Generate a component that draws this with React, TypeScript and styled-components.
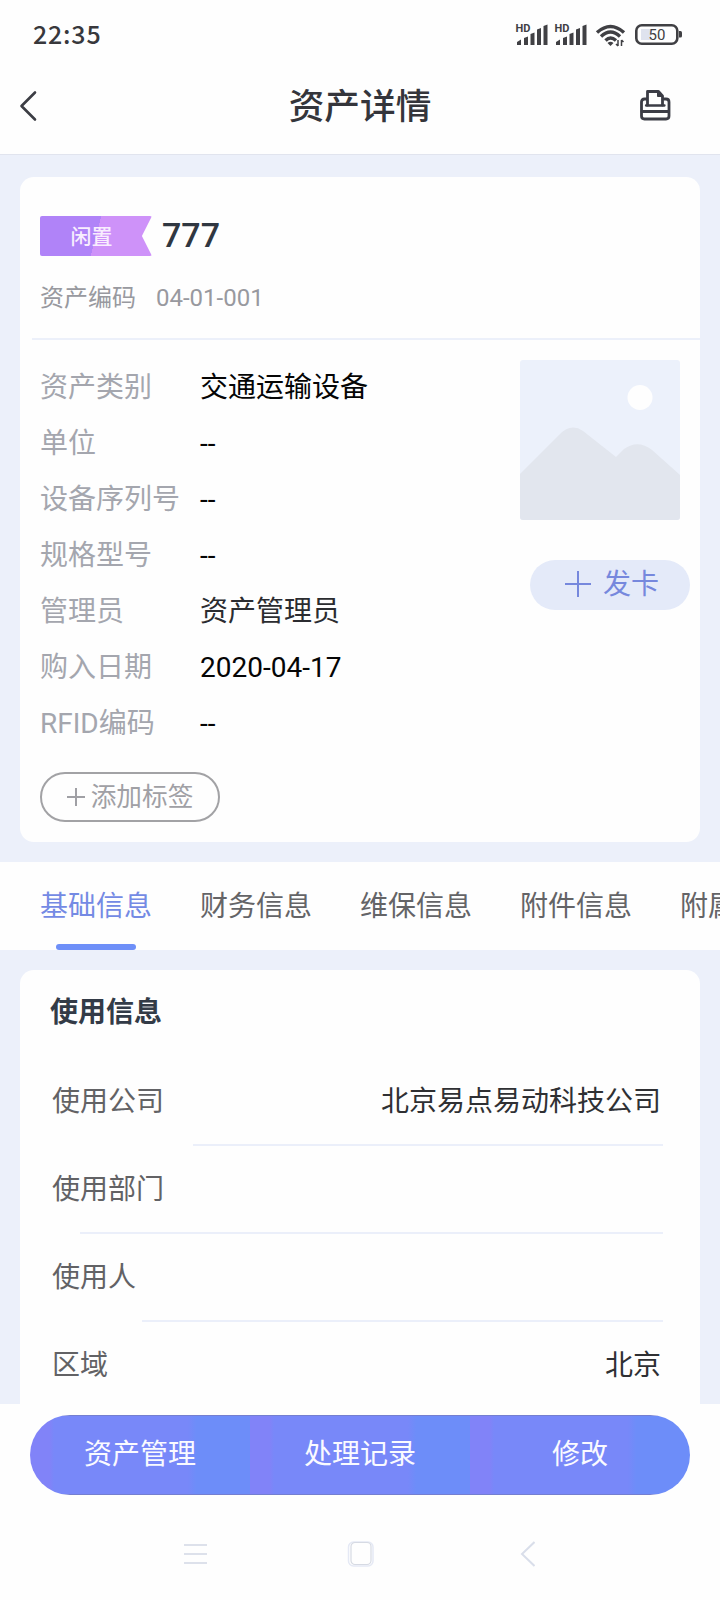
import React from "react";
import styled, { createGlobalStyle } from "styled-components";

const GlobalStyle = createGlobalStyle`
  *, *::before, *::after { box-sizing: border-box; }
  body {
    margin: 0;
    background: #fefefe;
    font-family: Roboto, "Noto Sans CJK SC", sans-serif;
    font-size: 28px;
    color: #2f3136;
  }
`;

const Screen = styled.div`
  width: 720px;
  height: 1600px;
  overflow: hidden;
  display: flex;
  flex-direction: column;
`;

const StatusBar = styled.div`
  height: 60px;
  flex: none;
  display: flex;
  align-items: center;
  justify-content: space-between;
  padding: 10px 37px 0 33px;
`;

const Clock = styled.span`
  font-family: "Noto Sans CJK SC", sans-serif;
  font-size: 25px;
  line-height: 30px;
  font-weight: 500;
  letter-spacing: 0.8px;
  padding-bottom: 4px;
  color: #38383c;
`;

const StatusIcons = styled.svg`
  display: block;
  margin-top: -1px;
`;

const Header = styled.header`
  height: 95px;
  flex: none;
  display: grid;
  grid-template-columns: 80px 1fr 80px;
  align-items: center;
  border-bottom: 1px solid #e1e4ee;
  padding-bottom: 3px;
`;

const HeaderIcon = styled.svg`
  display: block;
`;

const Title = styled.h1`
  margin: 0;
  padding-top: 3px;
  text-align: center;
  font-size: 35.7px;
  line-height: 44px;
  font-weight: 500;
  color: #34353b;
`;

const Content = styled.main`
  height: 1249px;
  flex: none;
  overflow: hidden;
  background: #ecf0fa;
  padding-top: 22px;
  display: flex;
  flex-direction: column;
  gap: 20px;
`;

const Card = styled.section<{ $height: number }>`
  height: ${(p) => p.$height}px;
  flex: none;
  margin: 0 20px;
  background: #fefefe;
  border-radius: 14px;
`;

const Summary = styled.div`
  height: 161px;
  padding: 39px 20px 0;
`;

const NameRow = styled.div`
  display: flex;
  align-items: center;
  height: 40px;
`;

const StatusRibbon = styled.span`
  width: 112px;
  height: 40px;
  padding-right: 9px;
  border-radius: 2px;
  background: linear-gradient(105deg, #b083f8 0 50%, #ce92f9 50% 100%);
  clip-path: polygon(0 0, 100% 0, 91% 50%, 100% 100%, 0 100%);
  color: #f8eefe;
  font-size: 21px;
  font-weight: 500;
  line-height: 42px;
  text-align: center;
`;

const AssetName = styled.span`
  margin-left: 10px;
  font-size: 34px;
  line-height: 38px;
  height: 40px;
  font-weight: 500;
  color: #303741;
`;

const CodeRow = styled.div`
  display: flex;
  gap: 20px;
  margin-top: 28px;
  font-size: 24px;
  line-height: 28px;
  color: #98999f;
`;

const Details = styled.div`
  margin-left: 12px;
  border-top: 2px solid #ecf0fa;
  padding: 20px 0 0 8px;
  display: flex;
  justify-content: space-between;
`;

const Fields = styled.dl`
  margin: 0;
  display: grid;
  grid-template-columns: 160px auto;
  grid-auto-rows: 56px;
  line-height: 56px;
`;

const FieldLabel = styled.dt`
  color: #a4a6ae;
  white-space: nowrap;
`;

const FieldValue = styled.dd<{ $soft?: boolean }>`
  margin: 0;
  color: ${(p) => (p.$soft ? "#2b2c30" : "#050505")};
`;

const Media = styled.div`
  display: flex;
  flex-direction: column;
  align-items: flex-end;
  gap: 40px;
  padding-right: 10px;
`;

const Picture = styled.svg`
  display: block;
  margin-right: 10px;
`;

const IssueButton = styled.button`
  width: 160px;
  height: 50px;
  padding: 0 0 0 4px;
  border: 0;
  border-radius: 25px;
  background: #e4eaf9;
  color: #7688dd;
  font: inherit;
  line-height: 50px;
  display: flex;
  align-items: center;
  justify-content: center;
  gap: 12px;

  svg {
    margin-top: -3px;
  }
`;

const TagButton = styled.button`
  display: flex;
  align-items: center;
  justify-content: center;
  gap: 6px;
  width: 180px;
  height: 50px;
  margin: 20px 0 0 20px;
  padding: 0;
  border: 2px solid #a2a2a5;
  border-radius: 25px;
  background: none;
  color: #a0a0a5;
  font: inherit;
  font-size: 25.7px;
  line-height: 46px;
`;

const Tabs = styled.nav`
  height: 88px;
  flex: none;
  background: #fefefe;
  padding-left: 40px;
  display: flex;
  gap: 48px;
`;

const Tab = styled.a<{ $active?: boolean }>`
  flex: none;
  height: 88px;
  display: flex;
  flex-direction: column;
  align-items: center;
  justify-content: space-between;
  line-height: 90px;
  white-space: nowrap;
  color: ${(p) => (p.$active ? "#748ae4" : "#646467")};
  &::after {
    content: "";
    flex: none;
    width: 80px;
    height: 6px;
    margin-top: -8px;
    border-radius: 3px;
    background: ${(p) => (p.$active ? "#6e8ff8" : "transparent")};
  }
`;

const SectionTitle = styled.h2`
  margin: 0;
  padding: 0 30px;
  height: 88px;
  font-size: 28px;
  line-height: 86px;
  font-weight: 700;
  color: #333b47;
`;

const InfoRow = styled.div<{ $lineStart?: number }>`
  height: 88px;
  margin: 0 37px 0 32px;
  display: flex;
  justify-content: space-between;
  line-height: 88px;
  background: linear-gradient(#ebeffa, #ebeffa) no-repeat right bottom;
  background-size: ${(p) => (p.$lineStart === undefined ? "0 0" : `calc(100% - ${p.$lineStart}px) 2px`)};
`;

const InfoLabel = styled.span`
  color: #626265;
`;

const InfoValue = styled.span`
  padding-right: 2px;
  color: #2f3033;
`;

const Footer = styled.footer`
  flex: 1;
  padding: 11px 30px 0;
`;

const ActionBar = styled.div`
  height: 80px;
  border-radius: 40px;
  overflow: hidden;
  display: flex;
`;

const Action = styled.button`
  flex: 1;
  padding: 0;
  border: solid #747fd0;
  border-width: 1px 0;
  background: linear-gradient(90deg, #8183f8 0 20px, #7888f9 24px 158px, #6d8df9 166px);
  color: #fafaff;
  font: inherit;
  line-height: 78px;
`;

const SystemNav = styled.div`
  display: grid;
  grid-template-columns: 164px 172px auto;
  align-items: center;
  margin: 43px 0 0 153px;
  height: 32px;
`;

const fields: Array<{ label: string; value: string; soft?: boolean }> = [
  { label: "资产类别", value: "交通运输设备" },
  { label: "单位", value: "--" },
  { label: "设备序列号", value: "--" },
  { label: "规格型号", value: "--" },
  { label: "管理员", value: "资产管理员", soft: true },
  { label: "购入日期", value: "2020-04-17" },
  { label: "RFID编码", value: "--" },
];

const tabs = ["基础信息", "财务信息", "维保信息", "附件信息", "附属信息"];

const usage: Array<{ label: string; value: string; line?: number }> = [
  { label: "使用公司", value: "北京易点易动科技公司", line: 141 },
  { label: "使用部门", value: "", line: 28 },
  { label: "使用人", value: "", line: 90 },
  { label: "区域", value: "北京" },
];

const Signal = ({ x }: { x: number }) => (
  <g transform={`translate(${x} 0)`}>
    <text x="-0.500" y="12.500" fontSize="11" fontWeight="700" fontFamily="Roboto">HD</text>
    <path d="M1 26v-3l4-2.500v5.500zM8 26v-7l4-1.500v8.500zM14.500 26v-11l4-1.500v12.500zM21 26v-15.500l4-1.500v17zM27.500 26v-19l4-1.500v20.500z" />
  </g>
);

const Status = () => (
  <StatusIcons width="168" height="32" viewBox="0 0 168 32" fill="#404044">
    <Signal x={1} />
    <Signal x={40} />
    <g fill="none" stroke="#404044" strokeWidth="3.400" transform="translate(81 0)">
      <path d="M1 13.500Q14.500 1.500 28 13.500" />
      <path d="M5 17.500Q14.500 8.500 24 17.500" />
      <path d="M9.500 21.500Q14.500 16.500 20 21.500" />
    </g>
    <path d="M92.500 24q3-2.500 6 0l-3 3z" />
    <path d="M103 21v6M103 27l-2-2M106.500 27v-6M106.500 21l2 2" stroke="#404044" strokeWidth="1.500" />
    <rect x="121.300" y="6.300" width="41" height="18.400" rx="5.500" fill="none" stroke="#404044" strokeWidth="2.600" />
    <rect x="126" y="10" width="10" height="11" fill="#dfe3ee" />
    <path d="M164 12h1.500q1.500 0 1.500 1.500v3.500q0 1.500-1.500 1.500h-1.500z" />
    <text x="142" y="20.500" fontSize="15" textAnchor="middle" fontFamily="Roboto">50</text>
  </StatusIcons>
);

const Plus = ({ size, weight }: { size: number; weight: number }) => (
  <svg width={size} height={size} viewBox={`0 0 ${size} ${size}`} fill="none" stroke="currentColor" strokeWidth={weight}>
    <path d={`M0 ${size / 2}H${size}M${size / 2} 0V${size}`} />
  </svg>
);

export default function App() {
  return (
    <Screen>
      <GlobalStyle />
      <StatusBar>
        <Clock>22:35</Clock>
        <Status />
      </StatusBar>
      <Header>
        <HeaderIcon width="60" height="40" viewBox="0 0 60 40" fill="none" stroke="#3c3d44" strokeWidth="2.600" strokeLinecap="round" strokeLinejoin="round">
          <path d="M35 6.500L21.500 20L35 33.500" />
        </HeaderIcon>
        <Title>资产详情</Title>
        <HeaderIcon width="32" height="32" viewBox="0 0 32 32" fill="none" stroke="#3b3c45" strokeWidth="2.800" strokeLinejoin="round" strokeLinecap="round">
          <path d="M6.500 9H4.500q-3 0-3 3V26q0 3 3 3h21.500q3 0 3-3V12q0-3-3-3H24" />
          <path d="M7.500 15V1.500H18.500L22.500 6V15M2 21.500H28.500" />
          <path d="M6 15.500H24.500" strokeWidth="2.300" />
          <path d="M17.500 2V6.500H22.500z" fill="#3b3c45" strokeWidth="1" />
        </HeaderIcon>
      </Header>
      <Content>
        <Card $height={665}>
          <Summary>
            <NameRow>
              <StatusRibbon>闲置</StatusRibbon>
              <AssetName>777</AssetName>
            </NameRow>
            <CodeRow>
              <span>资产编码</span>
              <span>04-01-001</span>
            </CodeRow>
          </Summary>
          <Details>
            <Fields>
              {fields.map((f) => (
                <React.Fragment key={f.label}>
                  <FieldLabel>{f.label}</FieldLabel>
                  <FieldValue $soft={f.soft}>{f.value}</FieldValue>
                </React.Fragment>
              ))}
            </Fields>
            <Media>
              <Picture width="160" height="160" viewBox="0 0 160 160">
                <rect width="160" height="160" rx="3" fill="#ecf1fb" />
                <circle cx="120" cy="37.500" r="12.500" fill="#fefefe" />
                <path d="M0 114L39 75Q51 62.500 63 71L96 97L104 89Q118 79 132 90L160 115V157q0 3-3 3H3q-3 0-3-3z" fill="#e2e6ee" />
              </Picture>
              <IssueButton>
                <Plus size={26} weight={2} />
                发卡
              </IssueButton>
            </Media>
          </Details>
          <TagButton>
            <Plus size={18} weight={2} />
            添加标签
          </TagButton>
        </Card>
        <Tabs>
          {tabs.map((t, i) => (
            <Tab key={t} $active={i === 0}>{t}</Tab>
          ))}
        </Tabs>
        <Card $height={520}>
          <SectionTitle>使用信息</SectionTitle>
          {usage.map((u) => (
            <InfoRow key={u.label} $lineStart={u.line}>
              <InfoLabel>{u.label}</InfoLabel>
              <InfoValue>{u.value}</InfoValue>
            </InfoRow>
          ))}
        </Card>
      </Content>
      <Footer>
        <ActionBar>
          <Action>资产管理</Action>
          <Action>处理记录</Action>
          <Action>修改</Action>
        </ActionBar>
        <SystemNav>
          <svg width="24" height="24" viewBox="0 0 24 24" stroke="#dde1eb" strokeWidth="2">
            <path d="M1 3H24M1 12H24M1 21H24" />
          </svg>
          <svg width="28" height="26" viewBox="0 0 28 26" fill="none">
            <rect x="1.500" y="1" width="24.500" height="24" rx="5" stroke="#e5e9f5" strokeWidth="1.500" />
            <rect x="4" y="1.500" width="20" height="22" rx="4" stroke="#d6dae3" strokeWidth="1.200" />
          </svg>
          <svg width="16" height="26" viewBox="0 0 16 26" fill="none" stroke="#d9deea" strokeWidth="2">
            <path d="M15.500 1L3 13L15.500 25" />
          </svg>
        </SystemNav>
      </Footer>
    </Screen>
  );
}
